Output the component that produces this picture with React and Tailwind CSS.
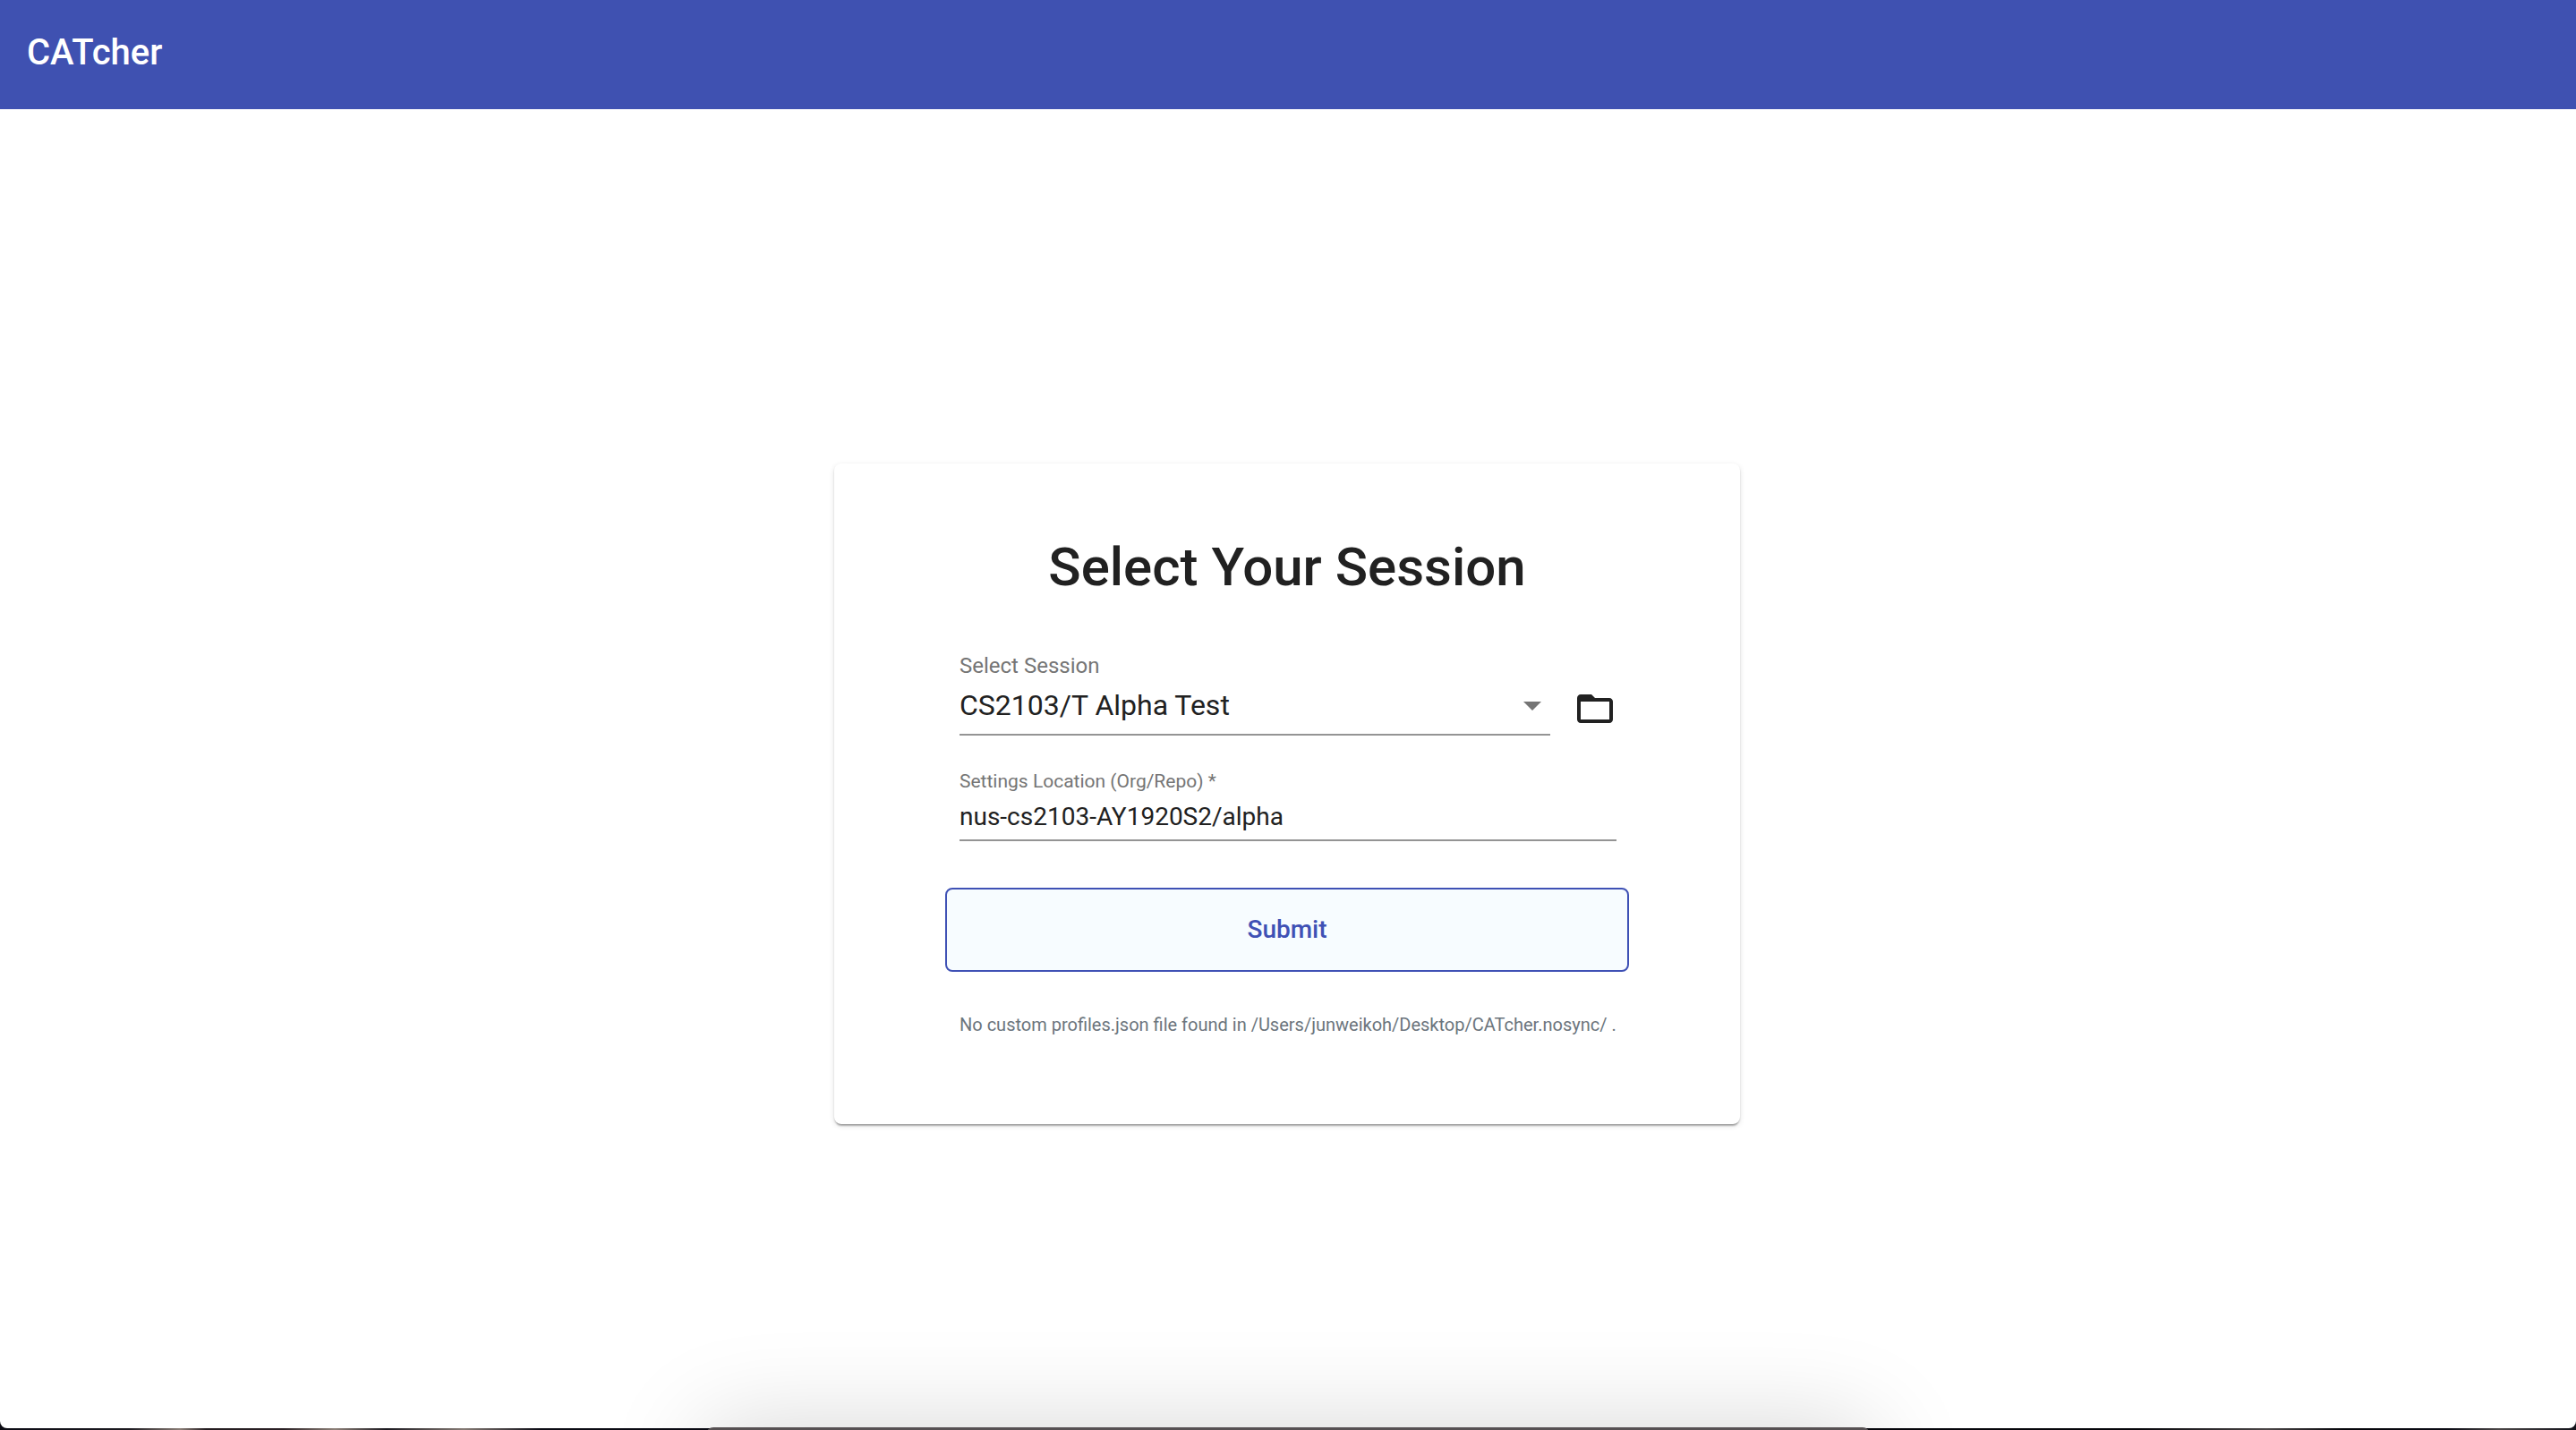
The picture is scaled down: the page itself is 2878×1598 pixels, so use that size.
import { MdFolderOpen } from "react-icons/md";

function Header() {
  return (
    <header className="flex h-[122px] items-center bg-[#3f51b1] px-[30px] pb-1">
      <h1 className="text-[40px] leading-[48px] font-medium text-white">CATcher</h1>
    </header>
  );
}

function SessionSelect() {
  return (
    <div className="flex items-end justify-between">
      <div className="w-[660px]">
        <label htmlFor="session" className="block text-2xl leading-7 text-[#757575]">
          Select Session
        </label>
        <div className="relative mt-3 border-b-2 border-[#949494] pb-[14px]">
          <select
            id="session"
            defaultValue="alpha"
            className="block h-9 w-full appearance-none bg-transparent text-[32px] leading-9 text-[#212121] outline-none"
          >
            <option value="alpha">CS2103/T Alpha Test</option>
          </select>
          <svg
            viewBox="0 0 20 10"
            className="pointer-events-none absolute top-[14px] right-[10px] h-[10px] w-5 fill-[#757575]"
            aria-hidden="true"
          >
            <path d="M0 0h20L10 10z" />
          </svg>
        </div>
      </div>
      <button type="button" aria-label="Open profiles folder" className="mb-[6px] text-[#212121]">
        <MdFolderOpen size={48} />
      </button>
    </div>
  );
}

function SettingsLocation() {
  return (
    <div className="mt-10">
      <label htmlFor="location" className="block text-[21px] leading-[22px] text-[#757575]">
        Settings Location (Org/Repo) *
      </label>
      <input
        id="location"
        type="text"
        required
        defaultValue="nus-cs2103-AY1920S2/alpha"
        className="mt-3 block h-11 w-full border-b-2 border-[#949494] bg-transparent pb-[10px] text-[28px] leading-8 text-[#212121] outline-none"
      />
    </div>
  );
}

function SessionCard() {
  return (
    <section className="w-full max-w-[1012px] rounded-lg px-[124px] pt-20 pb-[100px] shadow-[0_4px_2px_-2px_rgba(0,0,0,0.2),0_2px_2px_0_rgba(0,0,0,0.14),0_2px_6px_0_rgba(0,0,0,0.12)]">
      <h2 className="text-center text-6xl leading-[72px] font-medium text-[#212121]">
        Select Your Session
      </h2>
      <form className="mt-[60px]" onSubmit={(e) => e.preventDefault()}>
        <div className="pr-[14px] pl-4">
          <SessionSelect />
          <SettingsLocation />
        </div>
        <button
          type="submit"
          className="mt-[52px] h-[94px] w-full rounded-lg border-2 border-[#3f51b5] bg-[#f7fcff] text-[28px] leading-8 font-medium text-[#3f51b5]"
        >
          Submit
        </button>
      </form>
      <p className="mt-12 px-4 text-xl leading-[22px] whitespace-nowrap text-[#6c757d]">
        No custom profiles.json file found in /Users/junweikoh/Desktop/CATcher.nosync/ .
      </p>
    </section>
  );
}

export default function App() {
  return (
    <div className="relative flex min-h-screen flex-col overflow-hidden bg-[#0b0b14] bg-[linear-gradient(90deg,#0b0b14_0%,#1c1a20_5%,#8a7d76_7%,#241c20_8%,#2a2024_11%,#8d8078_13%,#1c1a20_15%,#857a74_18%,#0b0b14_21%,#05050a_83%,#4a4546_88%,#05050a_91%,#0b0b14_95%,#4a4546_97%,#12121a_100%)] pb-[2px] font-[Roboto,sans-serif]">
      <div className="flex-1 rounded-b-lg bg-white">
        <Header />
        <main className="flex justify-center pt-[396px] pr-[2px]">
          <SessionCard />
        </main>
      </div>
      <div className="absolute -bottom-[197px] left-1/2 h-[200px] w-[1300px] -translate-x-1/2 rounded-lg bg-[#565052] shadow-[0_0_110px_rgba(0,0,0,0.17)]" />
    </div>
  );
}
